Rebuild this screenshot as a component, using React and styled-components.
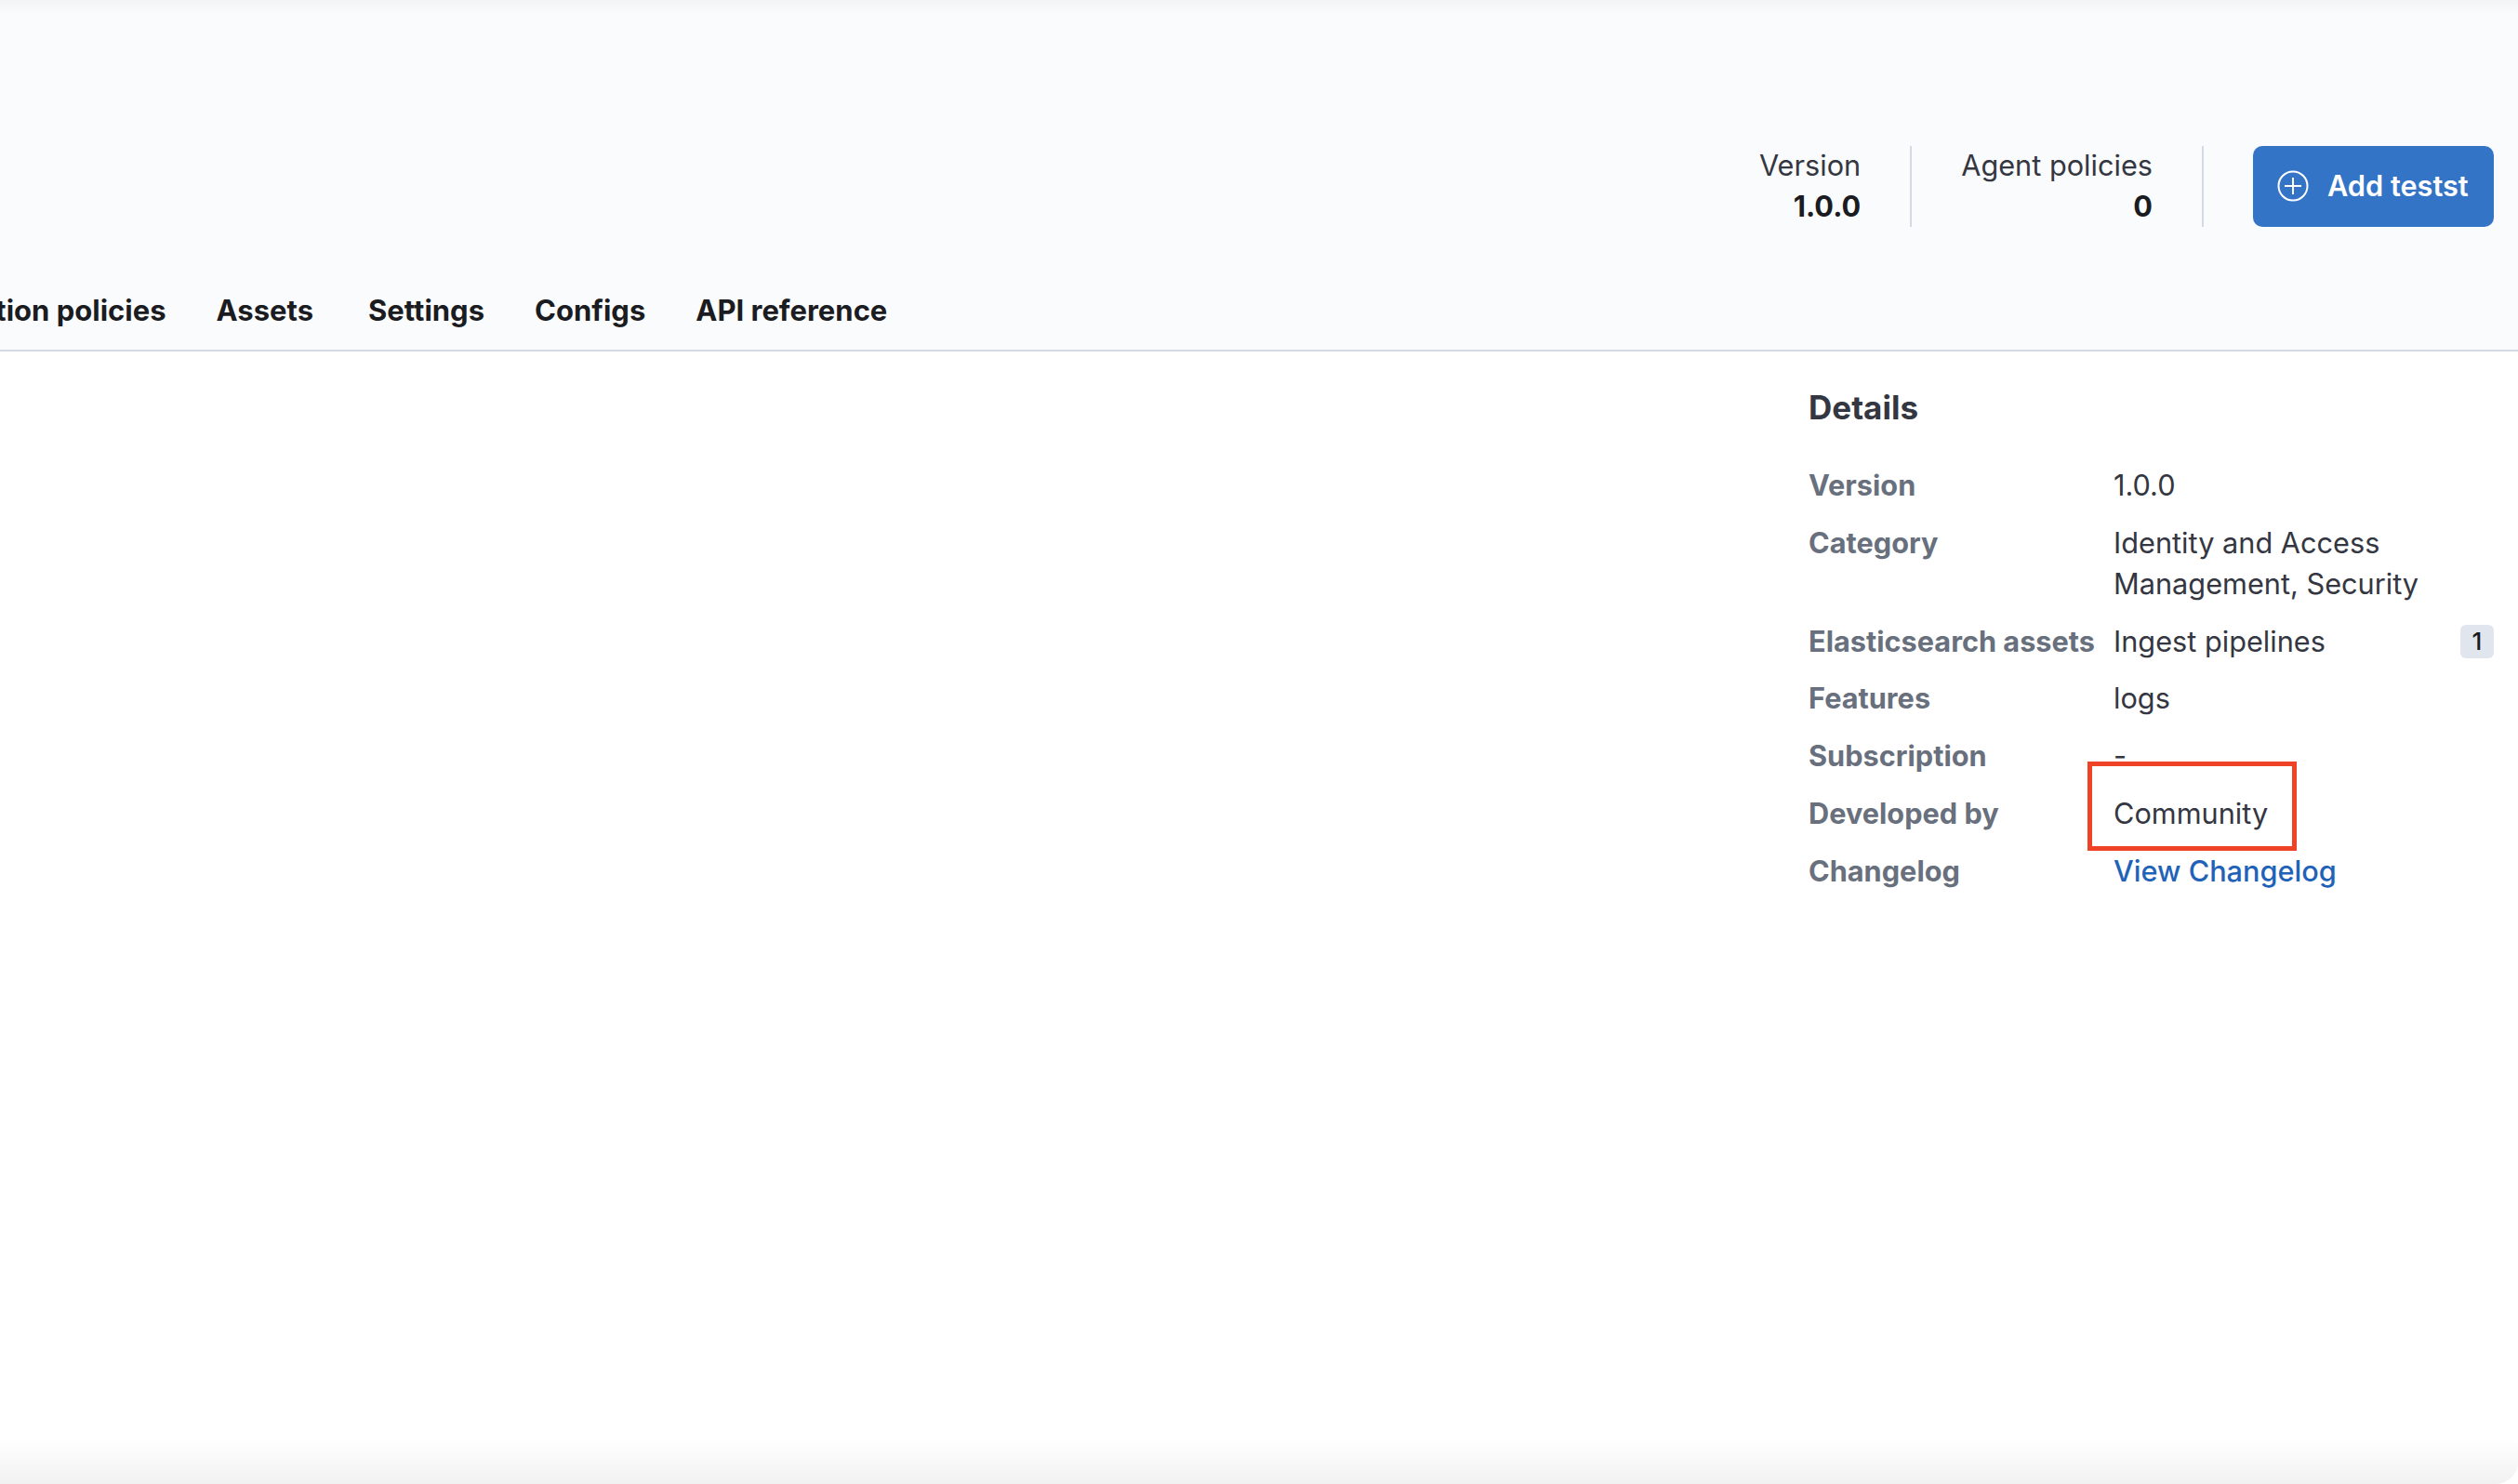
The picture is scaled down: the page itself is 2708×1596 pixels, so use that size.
import styled, { createGlobalStyle } from "styled-components";

const GlobalStyle = createGlobalStyle`
    html, body {
        margin: 0;
        padding: 0;
        background: #ffffff;
        font-family: Inter, "Liberation Sans", sans-serif;
        color: #343741;
    }
`

const Page = styled.div`
    position: relative;
    width: 2708px;
    height: 1596px;
    overflow: hidden;
    background: #ffffff;
`

const Header = styled.header`
    height: 378px;
    box-sizing: border-box;
    background: #fafbfd;
    border-bottom: 2px solid #d3dae6;
    display: flex;
    flex-direction: column;
`

const TopRow = styled.div`
    display: flex;
    justify-content: flex-end;
    align-items: stretch;
    padding: 157px 26px 0 0;
    height: 87px;
`

const Stat = styled.div`
    display: flex;
    flex-direction: column;
    align-items: flex-end;
    margin-top: -1px;
    font-size: 30.7px;
    line-height: 44px;
    color: #343741;
    strong {
        font-weight: 700;
        color: #1a1c21;
    }
`

const Divider = styled.div`
    width: 2px;
    background: #d3dae6;
    margin: 0 53px;
`

const AddButton = styled.button`
    display: flex;
    align-items: center;
    gap: 20px;
    width: 259px;
    height: 87px;
    box-sizing: border-box;
    padding: 0 0 2px 26px;
    border: none;
    border-radius: 10px;
    background: #3474c7;
    color: #ffffff;
    font-family: inherit;
    font-size: 30.7px;
    font-weight: 600;
    white-space: nowrap;
`

const Tabs = styled.nav`
    display: flex;
    gap: 54px;
    margin: 68px 0 0 -112px;
    font-size: 31px;
    line-height: 44px;
    font-weight: 700;
    color: #1a1c21;
    white-space: nowrap;
`

const Tab = styled.span`
    margin-right: ${(props) => props.$extra || 0}px;
`

const Details = styled.section`
    margin: 36px 0 0 1945px;
    width: 737px;
`

const Title = styled.h3`
    margin: 0 0 38px;
    font-size: 35px;
    line-height: 48px;
    font-weight: 700;
    color: #343741;
`

const Rows = styled.dl`
    display: grid;
    grid-template-columns: 328px 1fr;
    row-gap: 17.8px;
    margin: 0;
    font-size: 30.7px;
    line-height: 44px;
`

const Term = styled.dt`
    font-weight: 700;
    color: #69707d;
    white-space: nowrap;
`

const Value = styled.dd`
    position: relative;
    margin: 0;
    color: #343741;
    display: flex;
    justify-content: space-between;
    align-items: center;
`

const Highlight = styled.div`
    position: absolute;
    left: -28px;
    top: -34px;
    width: 225px;
    height: 96px;
    box-sizing: border-box;
    border: 5px solid #ee4327;
`

const Changelog = styled.a`
    color: #1f63b8;
    font-weight: 500;
    text-decoration: none;
`

const Badge = styled.span`
    width: 36px;
    height: 36px;
    border-radius: 6px;
    background: #e0e5ee;
    color: #1a1c21;
    font-size: 26px;
    font-weight: 500;
    line-height: 36px;
    text-align: center;
`

const TopShade = styled.div`
    position: absolute;
    left: 0;
    right: 0;
    top: 0;
    height: 16px;
    background: linear-gradient(#f3f4f6, rgba(250, 251, 253, 0));
    pointer-events: none;
`

const BottomShade = styled.div`
    position: absolute;
    left: 0;
    right: 0;
    bottom: 0;
    height: 48px;
    border-bottom-right-radius: 24px;
    background: linear-gradient(rgba(242, 242, 242, 0), #f1f1f1);
    pointer-events: none;
`

const PlusIcon = () => (
    <svg width="34" height="34" viewBox="0 0 34 34" fill="none" stroke="#fff" strokeWidth="2">
        <circle cx="17" cy="17" r="15.5" />
        <path d="M17 8v18M8 17h18" />
    </svg>
)

const App = () => {
    return (
        <Page>
            <GlobalStyle />
            <Header>
                <TopRow>
                    <Stat>
                        <span>Version</span>
                        <strong>1.0.0</strong>
                    </Stat>
                    <Divider />
                    <Stat>
                        <span>Agent policies</span>
                        <strong>0</strong>
                    </Stat>
                    <Divider />
                    <AddButton>
                        <PlusIcon />
                        Add testst
                    </AddButton>
                </TopRow>
                <Tabs>
                    <Tab>Integration policies</Tab>
                    <Tab $extra={5}>Assets</Tab>
                    <Tab>Settings</Tab>
                    <Tab>Configs</Tab>
                    <Tab>API reference</Tab>
                </Tabs>
            </Header>
            <Details>
                <Title>Details</Title>
                <Rows>
                    <Term>Version</Term>
                    <Value>1.0.0</Value>
                    <Term>Category</Term>
                    <Value>Identity and Access Management, Security</Value>
                    <Term>Elasticsearch assets</Term>
                    <Value>
                        Ingest pipelines
                        <Badge>1</Badge>
                    </Value>
                    <Term>Features</Term>
                    <Value>logs</Value>
                    <Term>Subscription</Term>
                    <Value>-</Value>
                    <Term>Developed by</Term>
                    <Value>
                        Community
                        <Highlight />
                    </Value>
                    <Term>Changelog</Term>
                    <Value>
                        <Changelog href="#">View Changelog</Changelog>
                    </Value>
                </Rows>
            </Details>
            <TopShade />
            <BottomShade />
        </Page>
    )
}

export default App
